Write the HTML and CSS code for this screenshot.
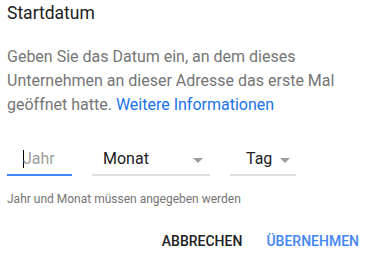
FILE: index.html
```html
<!DOCTYPE html>
<html lang="de">
<head>
<meta charset="utf-8">
<link rel="stylesheet" href="styles.css">
</head>
<body>
<div class="dialog">
  <h2 class="title">Startdatum</h2>
  <p class="desc">Geben Sie das Datum ein, an dem dieses Unternehmen an dieser Adresse das erste Mal geöffnet hatte. <a class="link" href="#">Weitere Informationen</a></p>
  <div class="fields">
    <div class="field field-year"><span class="caret"></span><span class="placeholder">Jahr</span></div>
    <div class="field field-month"><span class="value">Monat</span><span class="arrow"></span></div>
    <div class="field field-day"><span class="value">Tag</span><span class="arrow"></span></div>
  </div>
  <div class="helper">Jahr und Monat müssen angegeben werden</div>
  <div class="actions">
    <button class="btn btn-cancel">Abbrechen</button>
    <button class="btn btn-apply">Übernehmen</button>
  </div>
</div>
</body>
</html>
```

FILE: styles.css
```css
html, body {
  margin: 0;
  padding: 0;
  background: #ffffff;
}
body {
  font-family: Roboto, "Liberation Sans", Arial, sans-serif;
  width: 372px;
  height: 254px;
  overflow: hidden;
}
.dialog {
  padding: 1px 5px 0 7px;
}
.title {
  margin: 0;
  font-size: 17.5px;
  font-weight: 400;
  line-height: 24px;
  color: #212121;
}
.desc {
  margin: 20px 0 0 0;
  font-size: 16px;
  line-height: 24px;
  color: #757575;
}
.link {
  color: #1a73e8;
  text-decoration: none;
}
.fields {
  display: flex;
  align-items: flex-end;
  margin-top: 28px;
}
.field {
  display: flex;
  align-items: center;
  height: 27px;
  padding-bottom: 2px;
  border-bottom: 2px solid #e0e0e0;
  font-size: 16px;
  color: #212121;
}
.field-year {
  width: 49px;
  padding-left: 16px;
  border-bottom-color: #4285f4;
}
.caret {
  width: 1px;
  height: 18px;
  background: #000;
}
.placeholder {
  color: #9e9e9e;
  margin-left: -1px;
}
.field-month {
  width: 107px;
  padding-left: 11px;
  margin-left: 20px;
  justify-content: space-between;
}
.field-day {
  width: 50px;
  padding-left: 16px;
  margin-left: 20px;
}
.field-month .arrow {
  margin-right: 7px;
}
.field-day .arrow {
  margin-left: 8px;
}
.arrow {
  width: 0;
  height: 0;
  border-left: 5.5px solid transparent;
  border-right: 5.5px solid transparent;
  border-top: 5px solid #9e9e9e;
  margin-top: 3px;
}
.helper {
  margin-top: 15px;
  font-size: 12px;
  line-height: 16px;
  color: #757575;
}
.actions {
  display: flex;
  justify-content: flex-end;
  gap: 8px;
  margin-top: 16px;
}
.btn {
  border: none;
  background: none;
  padding: 0 8px;
  height: 36px;
  font-family: Roboto, "Liberation Sans", Arial, sans-serif;
  font-size: 14px;
  font-weight: 500;
  text-transform: uppercase;
  letter-spacing: 0;
}
.btn-cancel {
  color: #212121;
}
.btn-apply {
  color: #4285f4;
}
```
